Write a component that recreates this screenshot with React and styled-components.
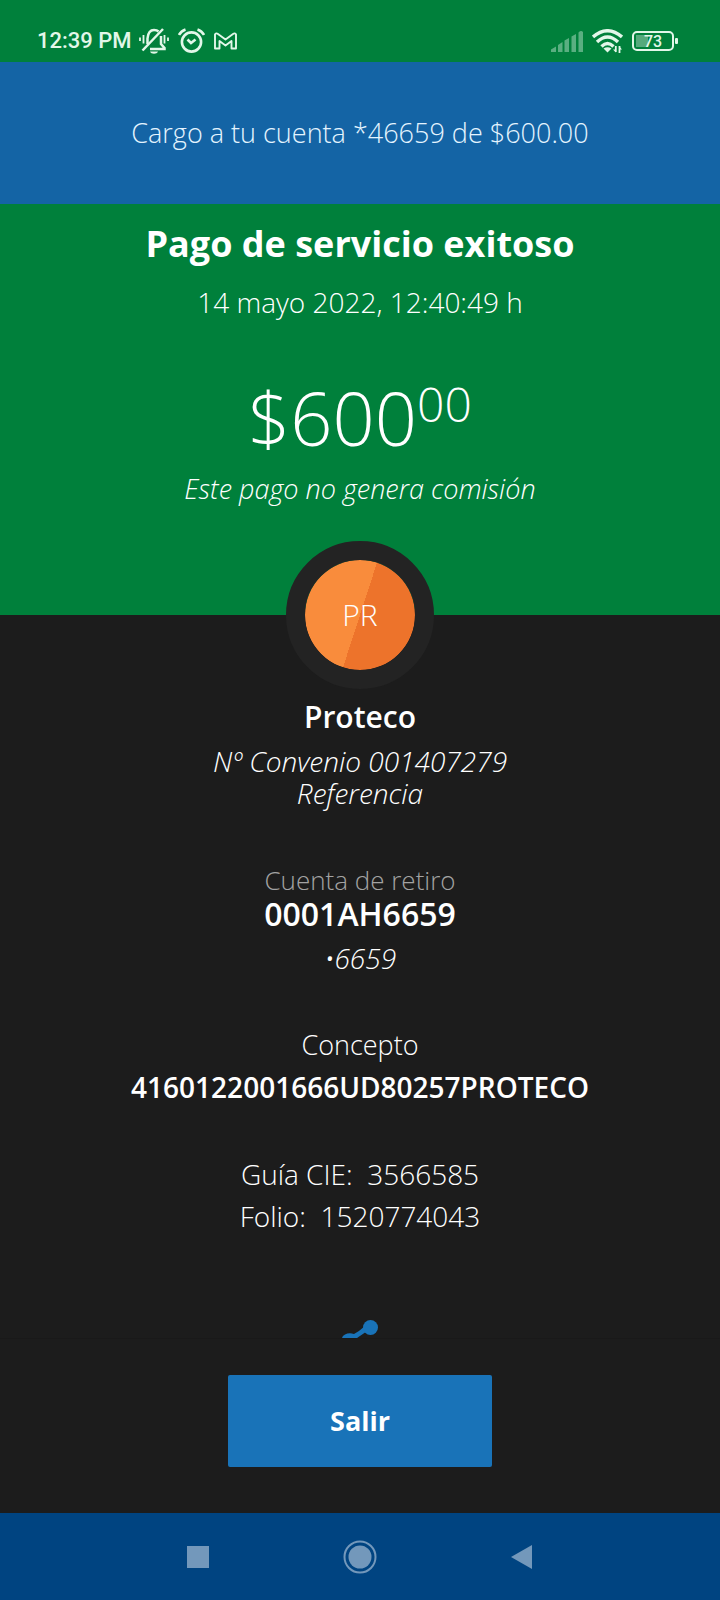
import React from "react";
import styled, { createGlobalStyle } from "styled-components";

const Global = createGlobalStyle`
  *, *::before, *::after { box-sizing: border-box; }
  body { margin: 0; background: #1c1c1c; }
  h1, p { margin: 0; font-weight: inherit; }
  button { border: 0; padding: 0; font: inherit; color: inherit; background: none; cursor: pointer; }
  svg { display: block; }
`;

const Screen = styled.div`
  display: flex;
  flex-direction: column;
  min-height: 100vh;
  background: #1c1c1c;
  color: #fff;
  font-family: "Open Sans", "Noto Sans", sans-serif;
  font-weight: 300;
  font-size: 27px;
  line-height: 32px;
  text-align: center;
`;

const StatusBar = styled.div`
  display: flex;
  align-items: center;
  justify-content: space-between;
  height: 62px;
  padding: 20px 42px 0 37px;
  background: #00803b;
  color: #e2f7e9;
`;

const StatusGroup = styled.div`
  display: flex;
  align-items: center;
  gap: ${(p) => p.$gap}px;
`;

const Clock = styled.time`
  font: 500 22px/24px Roboto, sans-serif;
`;

const Notice = styled.div`
  display: flex;
  align-items: center;
  justify-content: center;
  height: 142px;
  background: #1464a5;
  color: #e4f4ff;
`;

const Hero = styled.header`
  display: flex;
  flex-direction: column;
  align-items: center;
  padding: 16px 24px 110px;
  background: #00803b;
`;

const Title = styled.h1`
  font-size: 36px;
  line-height: 48px;
  font-weight: 700;
`;

const Line = styled.p`
  font-size: ${(p) => p.$size || 27}px;
  font-weight: ${(p) => (p.$strong ? 600 : 300)};
  font-style: ${(p) => (p.$italic ? "italic" : "normal")};
  color: ${(p) => (p.$muted ? "#a3a3a3" : "inherit")};
  line-height: ${(p) => (p.$size > 28 ? 36 : 32)}px;
  margin-top: ${(p) => p.$top || 0}px;
`;

const Amount = styled.p`
  display: flex;
  align-items: flex-start;
  margin-top: 60px;
  font-size: 74px;
  line-height: 80px;
`;

const Cents = styled.span`
  font-size: 48px;
  line-height: 52px;
`;

const Body = styled.main`
  flex: 1;
  display: flex;
  flex-direction: column;
  align-items: center;
  padding: 0 24px;
`;

const Avatar = styled.div`
  display: flex;
  align-items: center;
  justify-content: center;
  width: 148px;
  height: 148px;
  margin-top: -74px;
  border: 19px solid #232323;
  border-radius: 50%;
  background: linear-gradient(108deg, #f98c3c 50%, #ed732b 50%);
  background-clip: padding-box;
  background-color: #232323;
  font-size: 30px;
`;

const Section = styled.section`
  margin-top: ${(p) => p.$top}px;
`;

const Emblem = styled.div`
  height: 18px;
  margin-top: auto;
  overflow: hidden;
`;

const Footer = styled.footer`
  display: flex;
  justify-content: center;
  padding: 36px 0 46px;
  border-top: 1px solid #191919;
`;

const ExitButton = styled.button`
  && {
    width: 264px;
    height: 92px;
    border-radius: 2px;
    background: #1973b8;
    font-weight: 700;
  }
`;

const NavBar = styled.nav`
  display: flex;
  align-items: center;
  justify-content: center;
  gap: 114px;
  height: 87px;
  background: #004481;
  color: #7398bb;
`;

const NavButton = styled.button`
  display: flex;
  align-items: center;
  justify-content: center;
  width: 48px;
  height: 48px;
`;

const BellOff = () => (
  <svg width="30" height="26" viewBox="0 0 30 26" fill="none" stroke="currentColor" strokeWidth="2">
    <path d="M8.500 16V10.500C9 5 11.500 2 15 2C17 2 18.500 2.500 19.500 3.500M22 8V16L25.500 20V21H11" strokeWidth="2.500" />
    <path d="M3.500 22.500L24 1" strokeWidth="2.500" />
    <path d="M1 9.500V13M4.500 7V15.500M25.500 7V15.500M29 9.500V13" strokeWidth="1.800" />
    <path d="M11 23.500H19C18 26.500 12 26.500 11 23.500Z" fill="currentColor" stroke="none" />
  </svg>
);

const Alarm = () => (
  <svg width="27" height="26" viewBox="0 0 27 26" fill="none" stroke="currentColor" strokeWidth="2.600">
    <circle cx="13.500" cy="14" r="9.600" />
    <path d="M9.500 11.500L13 15L17.500 11.500" />
    <path d="M1 7Q3 3 7.500 1.500M26 7Q24 3 19.500 1.500" />
  </svg>
);

const Mail = () => (
  <svg width="23" height="18" viewBox="0 0 23 18" fill="none" stroke="currentColor" strokeWidth="1.900" strokeLinejoin="round">
    <path d="M1 16.500V2.500Q2 0.500 4 2L11.500 7.500L19 2Q21 0.500 22 2.500V16.500H17.500V9L11.500 13.500L5.500 9V16.500Z" />
  </svg>
);

const Signal = () => (
  <svg width="32" height="21" viewBox="0 0 32 21" fill="currentColor" opacity="0.4">
    <path d="M0 21V18.500L5 15.500V21Z" />
    <path d="M7 21V14L11.500 11V21Z" />
    <path d="M13.500 21V9.500L18 7V21Z" />
    <path d="M20.500 21V5.500L25 3V21Z" />
    <path d="M27.500 21V1.500Q30 -1 32 1V21Z" />
  </svg>
);

const Wifi = () => (
  <svg width="31" height="24" viewBox="0 0 31 24" fill="none" stroke="currentColor" strokeWidth="3.400">
    <path d="M1 8Q15.500 -4.500 30 8M5 13Q15.500 3 26 13M9.500 17.500Q15.500 11.500 21.500 17.500" />
    <path d="M11.500 19.500Q15.500 17 19.500 19.500L15.500 23.500Z" fill="currentColor" stroke="none" />
    <path d="M23.800 17V23M27.500 17V24" strokeWidth="1.800" />
    <path d="M21 20.500H24V23.500ZM30 20.500H27V17Z" fill="currentColor" stroke="none" />
  </svg>
);

const Battery = styled.div`
  display: flex;
  align-items: center;
  gap: 1px;
  &::after {
    content: "";
    width: 3px;
    height: 6px;
    border-radius: 1px;
    background: currentColor;
  }
`;

const BatteryCell = styled.span`
  width: 42px;
  height: 20px;
  border: 2px solid currentColor;
  border-radius: 5px;
  background: linear-gradient(90deg, #55aa7c 12px, transparent 12px) 2px 2px / 34px 12px no-repeat;
  font: 500 16px/17px Roboto, sans-serif;
`;

export default function App() {
  return (
    <>
      <Global />
      <Screen>
        <StatusBar>
          <StatusGroup $gap={9}>
            <StatusGroup $gap={7}>
              <Clock>12:39 PM</Clock>
              <BellOff />
            </StatusGroup>
            <Alarm />
            <Mail />
          </StatusGroup>
          <StatusGroup $gap={9}>
            <Signal />
            <Wifi />
            <Battery>
              <BatteryCell>73</BatteryCell>
            </Battery>
          </StatusGroup>
        </StatusBar>
        <Notice role="status">Cargo a tu cuenta *46659 de $600.00</Notice>
        <Hero>
          <Title>Pago de servicio exitoso</Title>
          <Line $size={28} $top={18}>14 mayo 2022, 12:40:49 h</Line>
          <Amount>
            $600<Cents>00</Cents>
          </Amount>
          <Line $italic $top={15}>Este pago no genera comisión</Line>
        </Hero>
        <Body>
          <Avatar>PR</Avatar>
          <Section $top={10}>
            <Line $strong $size={30}>Proteco</Line>
            <Line $italic $size={28} $top={10}>
              Nº Convenio 001407279
              <br />
              Referencia
            </Line>
          </Section>
          <Section $top={55}>
            <Line $muted $size={26}>Cuenta de retiro</Line>
            <Line $strong $size={32}>0001AH6659</Line>
            <Line $italic $size={28} $top={10}>•6659</Line>
          </Section>
          <Section $top={55}>
            <Line>Concepto</Line>
            <Line $strong $size={28} $top={10}>4160122001666UD80257PROTECO</Line>
          </Section>
          <Section $top={55}>
            <Line $size={28}>Guía CIE:&nbsp; 3566585</Line>
            <Line $size={28} $top={10}>Folio:&nbsp; 1520774043</Line>
          </Section>
          <Emblem>
            <svg width="36" height="36" viewBox="0 0 36 36" fill="#1973b8">
              <path d="M0 18.500Q0 16 3 14.500Q7 12.500 12 14Q17 11.500 23 6L26 10.500L15 18Q13.500 19 11 18.500Z" />
              <circle cx="28.500" cy="7.500" r="7.500" />
            </svg>
          </Emblem>
        </Body>
        <Footer>
          <ExitButton type="button">Salir</ExitButton>
        </Footer>
        <NavBar aria-label="Sistema">
          <NavButton type="button" aria-label="Recientes">
            <svg width="22" height="22" fill="currentColor"><rect width="22" height="22" /></svg>
          </NavButton>
          <NavButton type="button" aria-label="Inicio">
            <svg width="34" height="34" viewBox="0 0 34 34" fill="currentColor">
              <circle cx="17" cy="17" r="11.500" />
              <circle cx="17" cy="17" r="15.500" fill="none" stroke="currentColor" strokeWidth="2" />
            </svg>
          </NavButton>
          <NavButton type="button" aria-label="Atrás">
            <svg width="22" height="24" viewBox="0 0 22 24" fill="currentColor"><path d="M0 12L21 0V24Z" /></svg>
          </NavButton>
        </NavBar>
      </Screen>
    </>
  );
}
